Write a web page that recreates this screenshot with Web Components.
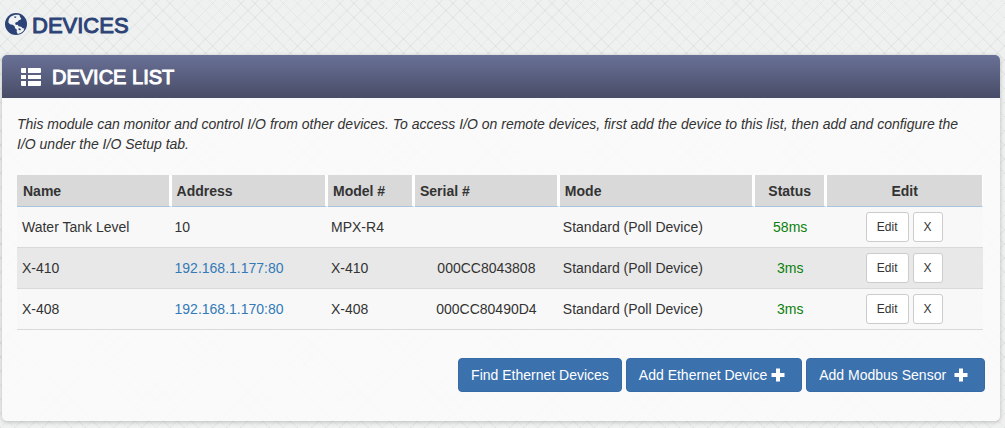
<!DOCTYPE html>
<html lang="en">
<head>
<meta charset="utf-8">
<title>Devices</title>
<style>
body { margin: 0; background: #eceeed; color: #333; font: 14px/20px "Liberation Sans", Arial, sans-serif; }
</style>
</head>
<body>
<devices-page></devices-page>
<script>
const define = (name, html, setup) => {
  const template = document.createElement('template');
  template.innerHTML = html;
  customElements.define(name, class extends HTMLElement {
    constructor() {
      super();
      this.attachShadow({ mode: 'open' }).append(template.content.cloneNode(true));
    }
    connectedCallback() { if (setup) setup(this, this.shadowRoot); }
  });
};

define('ui-icon', `
<style>
:host { display: block; flex: none; width: 20px; height: 20px; white-space: normal; }
:host([name="plus"]) { width: 14px; height: 14px; }
:host([name="globe"]) { width: 22px; height: 22px; }
svg { display: block; width: 100%; height: 100%; fill: currentColor; }
</style>
<svg aria-hidden="true"></svg>`, (el, root) => {
  const icons = {
    globe: ['0 0 22 22', '<circle cx="11" cy="11" r="11"/><path fill="#f1f3f2" d="M8 2.600l2.200-.9l3 .1l1.900 1l-.3 1.100l1.500 1.300l-.8 1.600l-1.700.4l-1.100 1.500l-2.200.9l-.4 1.700l1.500.7l1.300-.2l.5 1.500l2.700.5l1.600 1.500l1.700.3l-1 2.500l-2.700 2l-2.900.9l-1.100-2.100l.2-2.100l-1.800-1.600l-.6-2.300l-2-1.100l-2.600-.5l-1.600-2l.6-3.300l1.600-2.200z"/><path d="M9.500 3.300l2 .4l-.8 1.200l-1.500-.3zM13.600 15l2.300 1l-.4 1.300l-1.900-.4z"/>'],
    list: ['0 0 20 18', '<path d="M1 0h4v5H1a1 1 0 0 1-1-1V1a1 1 0 0 1 1-1zM7 0h12a1 1 0 0 1 1 1v3a1 1 0 0 1-1 1H7zM0 7h5v4H0zM7 7h13v4H7zM0 13h5v5H1a1 1 0 0 1-1-1zM7 13h13v4a1 1 0 0 1-1 1H7z"/>'],
    plus: ['0 0 14 14', '<path d="M5 .5h4V5h4.500v4H9v4.500H5V9H.5V5H5z"/>']
  };
  const svg = root.querySelector('svg');
  const [box, shape] = icons[el.getAttribute('name')];
  svg.setAttribute('viewBox', box);
  svg.innerHTML = shape;
});

define('ui-button', `
<style>
:host { display: inline-block; }
button { display: flex; align-items: center; gap: 4px; margin: 0; padding: 6px 12px; font: inherit; color: #fff; background: #3b71ad; border: 1px solid #366aa5; border-radius: 4px; cursor: pointer; white-space: pre; }
:host([small]) button { padding: 5px 10px; font-size: 12px; line-height: 18px; color: #333; background: #fff; border-color: #ccc; border-radius: 3px; }
::slotted(ui-icon) { margin-right: 4px; }
</style>
<button type="button"><slot></slot></button>`);

define('ui-panel', `
<style>
:host { display: block; background: rgba(252,252,252,.85); border-radius: 5px; box-shadow: 0 1px 4px rgba(0,0,0,.22); }
header { display: flex; align-items: center; gap: 11px; height: 43px; padding: 1px 19px 0; box-sizing: border-box; color: #fff; background: linear-gradient(#697197, #484c66); border-radius: 5px 5px 0 0; }
h2 { margin: 0; font-size: 20px; line-height: 24px; font-weight: 400; -webkit-text-stroke: 1px currentColor; }
.body { padding: 16px 15px 29px; }
</style>
<header><ui-icon name="list"></ui-icon><h2><slot name="title"></slot></h2></header>
<div class="body"><slot></slot></div>`);

define('device-table', `
<style>
:host { display: block; margin-right: 2px; }
table { width: 100%; table-layout: fixed; border-collapse: separate; border-spacing: 0; }
th { height: 31px; padding: 0 6px; text-align: left; font-weight: 700; background: #d9d9d9; background-clip: padding-box; border-right: 3px solid #fff; border-bottom: 1px solid #a9c4e0; }
th:nth-child(2), th:nth-child(3), th:nth-child(4), th:nth-child(5) { padding-left: 5px; }
th:last-child { border-right-width: 1px; }
td { height: 40px; padding: 0 5px; border-bottom: 1px solid #d9d9d9; background: #f8f8f8; }
td:nth-child(n+2) { padding-left: 3px; }
tr:nth-child(even) td { background: #e8e8e8; }
a { color: #337ab7; text-decoration: none; }
th.status, th.edit, .serial, .status, .edit { text-align: center; }
td.status { color: #0b800b; }
td.serial { padding-right: 5px; }
.actions { display: flex; justify-content: center; gap: 4px; }
</style>
<table>
<colgroup><col style="width:16%"><col style="width:16.200%"><col style="width:9%"><col style="width:15%"><col style="width:20.200%"><col style="width:7.500%"><col></colgroup>
<thead><tr><th>Name</th><th>Address</th><th>Model #</th><th>Serial #</th><th>Mode</th><th class="status">Status</th><th class="edit">Edit</th></tr></thead>
<tbody></tbody>
</table>`, (el, root) => {
  const devices = [
    ['Water Tank Level', '10', 'MPX-R4', '', '58ms'],
    ['X-410', '<a href="#x410">192.168.1.177:80</a>', 'X-410', '000CC8043808', '3ms'],
    ['X-408', '<a href="#x408">192.168.1.170:80</a>', 'X-408', '000CC80490D4', '3ms']
  ];
  root.querySelector('tbody').innerHTML = devices.map(([name, address, model, serial, status]) =>
    `<tr><td>${name}</td><td>${address}</td><td>${model}</td><td class="serial">${serial}</td><td>Standard (Poll Device)</td><td class="status">${status}</td><td class="edit"><div class="actions"><ui-button small>Edit</ui-button><ui-button small>X</ui-button></div></td></tr>`).join('');
});

define('devices-page', `
<style>
:host { display: block; min-height: 100vh; box-sizing: border-box; padding: 13px 5px 7px 2px;
  background: repeating-linear-gradient(45deg, rgba(0,0,0,.035) 0 1px, transparent 1px 10px), repeating-linear-gradient(-45deg, rgba(0,0,0,.035) 0 1px, transparent 1px 10px), #eff1f0; }
h1 { display: flex; align-items: center; gap: 5px; margin: 0 0 16px; padding-left: 3px; color: #2c4377; font-size: 22px; line-height: 26px; font-weight: 400; -webkit-text-stroke: 1px currentColor; }
h1 ui-icon { -webkit-text-stroke: 0; align-self: flex-start; }
p { margin: 0 0 21px; padding-right: 8px; font-style: italic; }
.actions { display: flex; justify-content: flex-end; flex-wrap: wrap; gap: 4px; margin: 28px 0 0; }
</style>
<h1><ui-icon name="globe"></ui-icon>DEVICES</h1>
<ui-panel>
<span slot="title">DEVICE LIST</span>
<p>This module can monitor and control I/O from other devices. To access I/O on remote devices, first add the device to this list, then add and configure the I/O under the I/O Setup tab.</p>
<device-table></device-table>
<div class="actions"><ui-button>Find Ethernet Devices</ui-button><ui-button>Add Ethernet Device<ui-icon name="plus"></ui-icon></ui-button><ui-button>Add Modbus Sensor <ui-icon name="plus"></ui-icon></ui-button></div>
</ui-panel>`);
</script>
</body>
</html>
